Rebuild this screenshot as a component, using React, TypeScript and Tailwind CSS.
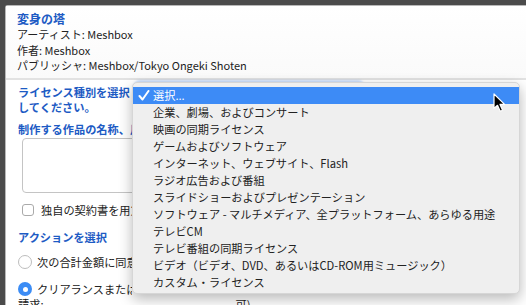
const options = [
  "選択...",
  "企業、劇場、およびコンサート",
  "映画の同期ライセンス",
  "ゲームおよびソフトウェア",
  "インターネット、ウェブサイト、Flash",
  "ラジオ広告および番組",
  "スライドショーおよびプレゼンテーション",
  "ソフトウェア - マルチメディア、全プラットフォーム、あらゆる用途",
  "テレビCM",
  "テレビ番組の同期ライセンス",
  "ビデオ（ビデオ、DVD、あるいはCD-ROM用ミュージック）",
  "カスタム・ライセンス",
];

const font = { fontFamily: '"Noto Sans CJK JP", "Noto Sans", sans-serif' };

function Check() {
  return (
    <svg width="12" height="11" viewBox="0 0 12 11" className="absolute left-[5px] top-[3px]">
      <path d="M1.5 6 L4.5 9.5 L10.5 1" fill="none" stroke="white" strokeWidth="2" strokeLinecap="round" strokeLinejoin="round" />
    </svg>
  );
}

function Cursor() {
  return (
    <svg width="14" height="20" viewBox="0 0 14 20" className="absolute left-[493px] top-[93px]">
      <path
        d="M1 1 L1 15.5 L4.5 12.3 L7.2 18.3 L9.6 17.3 L7 11.4 L11.6 11.4 Z"
        fill="black"
        stroke="white"
        strokeWidth="1.2"
        strokeLinejoin="round"
      />
    </svg>
  );
}

export default function App() {
  return (
    <div className="relative h-[305px] w-[526px] overflow-hidden bg-[#4b4b4b] pl-[5px] pt-[5px]" style={font}>
      <div className="h-[310px] rounded-tl-[3px] border-l border-t border-[#b8b8b8] bg-white text-[#222]">
        <div className="border-b-2 border-[#e2e2e2] bg-gradient-to-b from-white to-[#fafafa] px-[11px] pb-[4px] pt-[5px] text-[11px] leading-[15.5px]">
          <div className="text-[12px] font-bold leading-[16px] text-[#1d5bc4]">変身の塔</div>
          <div>アーティスト: Meshbox</div>
          <div>作者: Meshbox</div>
          <div>パブリッシャ: Meshbox/Tokyo Ongeki Shoten</div>
        </div>

        <div className="px-[12px] pt-[5px] text-[11.2px] leading-[15px]">
          <div className="flex items-start">
            <div className="w-[118px] shrink-0 font-bold text-[#1d5bc4]">
              ライセンス種別を選択
              <br />
              してください。
            </div>
            <div className="-mt-[2px] h-[19px] w-[226px] rounded-[4px] border border-[#9bb9ef] bg-white shadow-[0_0_2px_3px_rgba(110,160,240,0.35)]" />
          </div>

          <div className="mt-[7px] w-[114px] overflow-hidden whitespace-nowrap font-bold text-[#1d5bc4]">制作する作品の名称、用途</div>
          <div className="ml-[4px] mt-[1.5px] h-[55px] w-[300px] rounded-[4px] border border-[#c4c4c4] bg-white" />

          <div className="mt-[9.5px] flex items-center">
            <div className="ml-[4px] h-[12px] w-[12px] rounded-[3px] border border-[#aaa] bg-white" />
            <span className="ml-[7px] w-[91px] overflow-hidden whitespace-nowrap">独自の契約書を用意</span>
          </div>

          <div className="mt-[12px] font-bold text-[#1d5bc4]">アクションを選択</div>

          <div className="mt-[10px] flex items-center">
            <div className="h-[14px] w-[14px] shrink-0 rounded-full border border-[#bdbdbd] bg-white" />
            <span className="ml-[5px] w-[96px] overflow-hidden whitespace-nowrap">次の合計金額に同意</span>
          </div>

          <div className="mt-[12px] flex items-center">
            <div className="flex h-[14px] w-[14px] shrink-0 items-center justify-center rounded-full bg-[#3b8cf5]">
              <div className="h-[5px] w-[5px] rounded-full bg-white" />
            </div>
            <span className="ml-[5px] w-[95px] overflow-hidden whitespace-nowrap">クリアランスまたは</span>
          </div>
          <div className="flex">
            <span>請求:</span>
            <span className="ml-[192px]">可)</span>
          </div>
        </div>
      </div>

      <div className="absolute left-[132px] top-[82px] h-[212px] w-[388px] rounded-[5px] border border-[#d6d6d6] bg-[#efefef] pt-[4px] text-[11.2px] shadow-[0_5px_14px_rgba(0,0,0,0.28)]">
        {options.map((o, i) => (
          <div
            key={o}
            className={
              i === 0
                ? "relative h-[17px] whitespace-nowrap bg-[#3d8bf6] pl-[20px] leading-[17px] text-white"
                : "relative h-[17px] whitespace-nowrap pl-[20px] leading-[17px] text-[#222]"
            }
          >
            {i === 0 && <Check />}
            {o}
          </div>
        ))}
      </div>

      <Cursor />
    </div>
  );
}
